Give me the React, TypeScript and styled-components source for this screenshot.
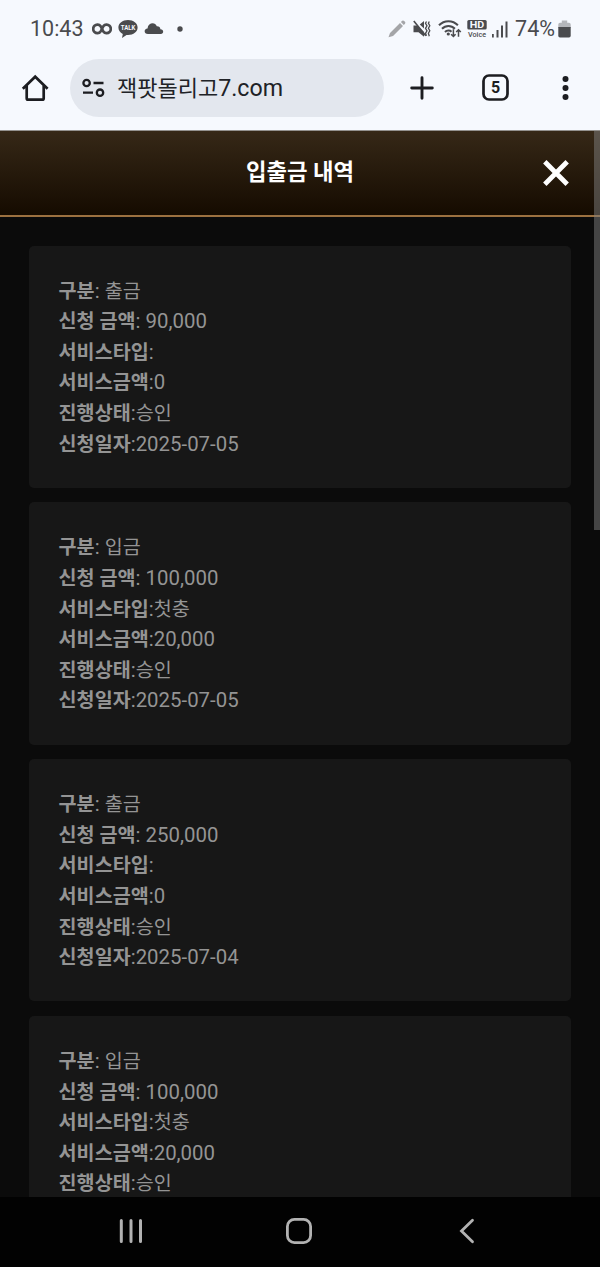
import React from "react";
import styled, { createGlobalStyle } from "styled-components";

const GlobalStyle = createGlobalStyle`
  * { box-sizing: border-box; }
  body { margin: 0; background: #0b0b0b; overflow: hidden; }
`;

const Screen = styled.div`
  width: 600px;
  height: 1267px;
  display: flex;
  flex-direction: column;
  overflow: hidden;
  background: #0b0b0b;
  font-family: Roboto, "Noto Sans CJK KR", sans-serif;
`;

const StatusBar = styled.div`
  height: 57px;
  flex: none;
  display: flex;
  justify-content: space-between;
  padding: 0 29px 0 30px;
  background: #f6f9fe;
  color: #4a4b4e;
`;

const StatusGroup = styled.div`
  display: flex;
  align-items: center;
  height: 57px;
`;

const StatusText = styled.span<{ $size: number }>`
  font-size: ${(p) => p.$size}px;
  line-height: 57px;
  white-space: nowrap;
`;

const Glyph = styled.svg<{ $left?: number }>`
  display: block;
  flex: none;
  margin-left: ${(p) => p.$left ?? 0}px;
`;

const Toolbar = styled.div`
  height: 74px;
  flex: none;
  display: flex;
  align-items: center;
  padding: 0 0 12px 20px;
  background: #f6f9fe;
  border-bottom: 1px solid #94928f;
  color: #1c1d21;
`;

const AddressPill = styled.div`
  width: 314px;
  height: 58px;
  margin-left: 20px;
  padding-left: 10px;
  display: flex;
  align-items: center;
  border-radius: 29px;
  background: #e3e7ee;
`;

const Address = styled.span`
  margin-left: 12px;
  padding-top: 2px;
  font-size: 23.2px;
  line-height: 56px;
  color: #202226;
  white-space: nowrap;
`;

const AddressHangul = styled.span`
  font-size: 22px;
`;

const Page = styled.main`
  position: relative;
  flex: 1;
  min-height: 0;
  display: flex;
  flex-direction: column;
  overflow: hidden;
`;

const Header = styled.header`
  height: 86px;
  flex: none;
  display: grid;
  grid-template-columns: 100px 1fr 100px;
  align-items: center;
  border-bottom: 2px solid #9c7140;
  background: linear-gradient(#362817, #150b00);
`;

const Title = styled.h1`
  grid-column: 2;
  margin: 0;
  padding-bottom: 2px;
  text-align: center;
  font-size: 22.3px;
  line-height: 32px;
  font-weight: 700;
  color: #fff;
`;

const CloseButton = styled.button`
  justify-self: end;
  margin-right: 30px;
  padding: 0;
  border: 0;
  background: none;
`;

const ScrollThumb = styled.div`
  position: absolute;
  top: 0;
  right: 0;
  width: 6px;
  height: 399px;
  background: rgba(128, 128, 128, 0.5);
`;

const CardList = styled.div`
  display: flex;
  flex-direction: column;
  gap: 14.7px;
  padding: 28.7px 29px 0;
`;

const Card = styled.article`
  height: 242.1px;
  flex: none;
  padding: 30px 29.6px 0;
  border-radius: 5px;
  background: #171717;
`;

const Row = styled.div`
  height: 30.6px;
  font-size: 20.4px;
  line-height: 30.6px;
  color: #949494;
  white-space: pre;
`;

const Label = styled.b`
  font-size: 19.6px;
  font-weight: 700;
`;

const Hangul = styled.span`
  font-size: 19.6px;
`;

const NavBar = styled.nav`
  height: 70px;
  flex: none;
  display: flex;
  justify-content: space-between;
  align-items: center;
  padding: 0 125px 2px 118px;
  background: #020202;
`;

type Entry = { kind: string; amount: string; service: string; bonus: string; date?: string };

const entries: Entry[] = [
  { kind: "출금", amount: "90,000", service: "", bonus: "0", date: "2025-07-05" },
  { kind: "입금", amount: "100,000", service: "첫충", bonus: "20,000", date: "2025-07-05" },
  { kind: "출금", amount: "250,000", service: "", bonus: "0", date: "2025-07-04" },
  { kind: "입금", amount: "100,000", service: "첫충", bonus: "20,000" },
];

function EntryCard({ entry }: { entry: Entry }) {
  return (
    <Card>
      <Row><Label>구분</Label>: <Hangul>{entry.kind}</Hangul></Row>
      <Row><Label>신청 금액</Label>: {entry.amount}</Row>
      <Row><Label>서비스타입</Label>:<Hangul>{entry.service}</Hangul></Row>
      <Row><Label>서비스금액</Label>:{entry.bonus}</Row>
      <Row><Label>진행상태</Label>:<Hangul>승인</Hangul></Row>
      {entry.date && <Row><Label>신청일자</Label>:{entry.date}</Row>}
    </Card>
  );
}

export default function App() {
  return (
    <Screen>
      <GlobalStyle />
      <StatusBar>
        <StatusGroup>
          <StatusText $size={21.5}>10:43</StatusText>
          <Glyph $left={8} width="20" height="14" viewBox="0 0 20 14" fill="none" stroke="currentColor" strokeWidth="2.7">
            <path d="M8.6 9.6A4.2 4.2 0 1 1 8.600 4.200L11.400 9.600A4.200 4.200 0 1 0 11.400 4.200L8.600 9.600" />
          </Glyph>
          <Glyph $left={6} width="20" height="20" viewBox="0 0 20 20">
            <path d="M10 1C4.500 1 .4 4.300.4 8.500c0 2.800 1.700 5.100 4.400 6.400L4 19l4.500-3.100 1.500.1c5.500 0 9.600-3.300 9.600-7.500S15.500 1 10 1z" fill="currentColor" />
            <text x="10" y="11.200" textAnchor="middle" fontFamily="Roboto" fontWeight="700" fontSize="7.500" textLength="14.500" lengthAdjust="spacingAndGlyphs" fill="#f6f9fe">TALK</text>
          </Glyph>
          <Glyph $left={6} width="20" height="13" viewBox="0 0 20 13" fill="currentColor">
            <path d="M4 12C-.4 12-.4 6.700 3.500 6.400 4.200.5 11.200-.3 12.800 4.300c2.300-.1 3.500 1.100 3.600 3 3.800.2 3.500 4.700.4 4.700z" />
          </Glyph>
          <Glyph $left={13} width="6" height="6" viewBox="0 0 6 6"><circle cx="3" cy="3" r="2.700" fill="currentColor" /></Glyph>
        </StatusGroup>
        <StatusGroup>
          <Glyph width="18" height="18" viewBox="0 0 18 18" fill="#a4a5a8">
            <path d="M.5 17.200 2 12.900 12 3l3 3L5 15.900zM12.900 2.100l1.300-1.300q1-.7 1.900.1l.9.9q.8 1 0 1.900l-1.200 1.300z" />
          </Glyph>
          <Glyph $left={7} width="18" height="18" viewBox="0 0 18 18" fill="none" stroke="currentColor">
            <path d="M.5 5.500h3.800L11 12v4.700L5.500 12.200h-5zM6.800 4.400 11 1v7.500z" fill="currentColor" stroke="none" />
            <path d="m.8 1 12 14.800" strokeWidth="1.600" />
            <path d="m13.500 1.500-1 1.800 1.500 2.500-1.500 2.500 1.500 2.500-1.500 2.500 1 2.400M16.300 1.500l-.9 1.800 1.400 2.500-1.400 2.500 1.400 2.500-1.400 2.500.9 2.900" strokeWidth="1.300" />
          </Glyph>
          <Glyph $left={7} width="24" height="19" viewBox="0 0 24 19" fill="none" stroke="currentColor" strokeWidth="2">
            <path d="M1 6.300C6.200.8 14.700.8 19.900 6.300M4 9.800c3.600-3.800 9.300-3.800 12.900 0M7 13c1.800-1.900 4.900-1.900 6.500-.3" />
            <circle cx="10.300" cy="15" r="1.600" fill="currentColor" stroke="none" />
            <path d="M15.400 10.200v7.300m-2.300-2.300 2.300 2.300 2.200-2.300M20.500 17.800v-7m-2.300 2.200 2.300-2.300 2.300 2.300" strokeWidth="1.500" />
          </Glyph>
          <Glyph $left={5} width="20" height="19" viewBox="0 0 20 19">
            <rect x=".3" y="1" width="19.400" height="9.500" rx="1.500" fill="currentColor" />
            <text x="10" y="8.800" textAnchor="middle" fontFamily="Roboto" fontWeight="700" fontSize="8.500" textLength="14.500" lengthAdjust="spacingAndGlyphs" fill="#f6f9fe">HD</text>
            <text x="10" y="17.500" textAnchor="middle" fontFamily="Roboto" fontWeight="500" fontSize="7" textLength="18" lengthAdjust="spacingAndGlyphs" fill="currentColor">Voice</text>
          </Glyph>
          <Glyph $left={5} width="16" height="18" viewBox="0 0 16 18" fill="currentColor">
            <path d="M0 14h1.800v3.500H0zM4.500 10h2v7.500h-2zM9 5.500h2v12H9zM13.500 1.500h2v16h-2z" />
          </Glyph>
          <Glyph width="7" height="1" />
          <StatusText $size={21.5}>74%</StatusText>
          <Glyph $left={3} width="13" height="18" viewBox="0 0 13 18">
            <path d="M3.800.5h5.400v2.200H11q1.700 0 1.700 1.700V8H.3V4.400q0-1.700 1.700-1.700h1.800z" fill="#b4b6ba" />
            <path d="M.3 7h12.400v8.800q0 1.700-1.700 1.700H2q-1.700 0-1.700-1.700z" fill="currentColor" />
          </Glyph>
        </StatusGroup>
      </StatusBar>

      <Toolbar>
        <Glyph width="30" height="30" viewBox="0 0 30 30" fill="none" stroke="currentColor" strokeWidth="2.700">
          <path d="m2.800 15.700 12.400-12 12.400 12M6.700 12.800v12.400q0 1.500 1.500 1.500h14q1.500 0 1.500-1.500V12.800" />
        </Glyph>
        <AddressPill>
          <Glyph $left={2} width="23" height="20" viewBox="0 0 23 20" fill="none" stroke="currentColor" strokeWidth="2.300">
            <circle cx="4.600" cy="5" r="3.200" /><path d="M11.500 5H21.500M1 14.700h10" /><circle cx="18" cy="14.700" r="3.200" />
          </Glyph>
          <Address><AddressHangul>잭팟돌리고</AddressHangul>7.com</Address>
        </AddressPill>
        <Glyph $left={26} width="24" height="24" viewBox="0 0 24 24" fill="none" stroke="currentColor" strokeWidth="2.900" strokeLinecap="round">
          <path d="M12 1.700v20.600M1.700 12h20.600" />
        </Glyph>
        <Glyph $left={48} width="27" height="27" viewBox="0 0 27 27">
          <rect x="1.500" y="1.500" width="24" height="24" rx="5.500" fill="none" stroke="currentColor" strokeWidth="2.700" />
          <text x="13.500" y="19.300" textAnchor="middle" fontFamily="Roboto" fontWeight="700" fontSize="16" fill="currentColor">5</text>
        </Glyph>
        <Glyph $left={53} width="7" height="26" viewBox="0 0 7 26" fill="currentColor">
          <circle cx="3.500" cy="4" r="3" /><circle cx="3.500" cy="13" r="3" /><circle cx="3.500" cy="22" r="3" />
        </Glyph>
      </Toolbar>

      <Page>
        <Header>
          <Title>입출금 내역</Title>
          <CloseButton aria-label="닫기">
            <Glyph width="28" height="28" viewBox="0 0 28 28" stroke="#fff" strokeWidth="4.800">
              <path d="m2.800 2.800 22.400 22.400M25.200 2.800 2.800 25.200" />
            </Glyph>
          </CloseButton>
        </Header>
        <CardList>
          {entries.map((entry, i) => <EntryCard key={i} entry={entry} />)}
        </CardList>
        <ScrollThumb />
      </Page>

      <NavBar>
        <Glyph width="26" height="26" viewBox="0 0 26 26" stroke="#b2b2b2" strokeWidth="3" strokeLinecap="round">
          <path d="M3.300 2.500v21M13 2.500v21M22.500 2.500v21" />
        </Glyph>
        <Glyph $left={-6} width="26" height="26" viewBox="0 0 26 26" fill="none" stroke="#b2b2b2" strokeWidth="2.800">
          <rect x="1.400" y="1.400" width="23.200" height="23.200" rx="7" />
        </Glyph>
        <Glyph width="16" height="26" viewBox="0 0 16 26" fill="none" stroke="#b2b2b2" strokeWidth="2.800" strokeLinecap="round">
          <path d="M13.500 2.300 2.500 13l11 10.700" />
        </Glyph>
      </NavBar>
    </Screen>
  );
}
